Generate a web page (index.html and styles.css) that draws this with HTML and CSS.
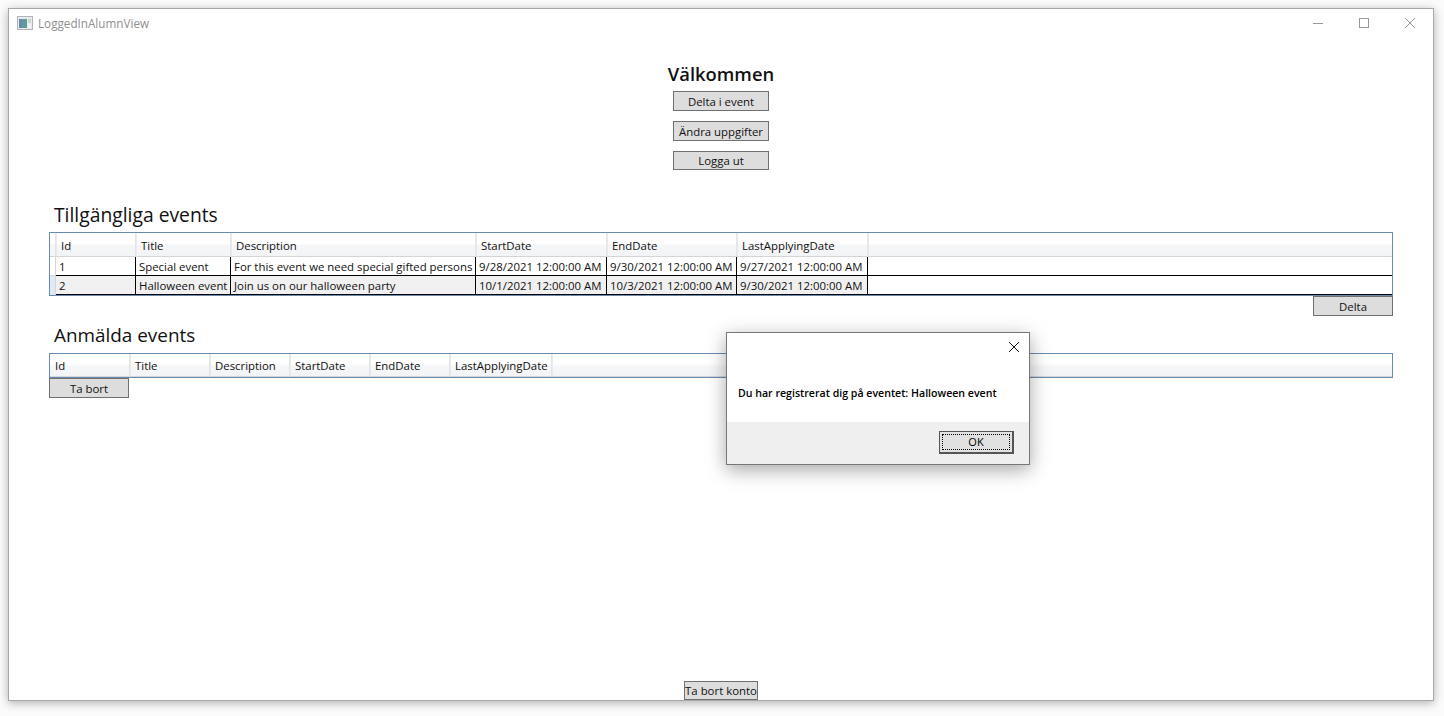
FILE: index.html
```html
<!DOCTYPE html>
<html lang="en">
<head>
    <meta charset="UTF-8">
    <meta name="viewport" content="width=device-width, initial-scale=1.0">
    <title>LoggedInAlumnView</title>
    <link rel="stylesheet" href="styles.css">
</head>
<body>

    <div class="window">

        <header class="titlebar">
            <svg class="app-icon" width="16" height="14" viewBox="0 0 16 14">
                <rect x="0.5" y="0.5" width="15" height="13" fill="#e8eaec" stroke="#b0b4b8"/>
                <rect x="2" y="3" width="8" height="9" fill="#5f9a9c"/>
                <rect x="2" y="3" width="3" height="9" fill="#6a88ab"/>
                <rect x="11" y="3" width="3" height="4" fill="#c6dccb"/>
                <rect x="11" y="8" width="3" height="4" fill="#f4f5f6"/>
            </svg>
            <span class="window-title">LoggedInAlumnView</span>
            <div class="window-controls">
                <svg width="12" height="12" viewBox="0 0 12 12"><path d="M1 6.5H11" stroke="#999" fill="none"/></svg>
                <svg width="12" height="12" viewBox="0 0 12 12"><rect x="1.5" y="1.5" width="9" height="9" stroke="#999" fill="none"/></svg>
                <svg width="12" height="12" viewBox="0 0 12 12"><path d="M1 1L11 11M11 1L1 11" stroke="#999" fill="none"/></svg>
            </div>
        </header>

        <main class="content">
            <div class="welcome">
                <h1>Välkommen</h1>
                <button class="btn btn-menu">Delta i event</button>
                <button class="btn btn-menu">Ändra uppgifter</button>
                <button class="btn btn-menu btn-short">Logga ut</button>
            </div>

            <h2 class="section-title">Tillgängliga events</h2>
            <div class="grid-box">
                <table class="grid">
                    <colgroup>
                        <col class="w-rowhead">
                        <col class="w-80">
                        <col class="w-95">
                        <col class="w-245">
                        <col class="w-131">
                        <col class="w-130">
                        <col class="w-131">
                        <col>
                    </colgroup>
                    <thead>
                        <tr>
                            <th class="corner"></th>
                            <th>Id</th>
                            <th>Title</th>
                            <th>Description</th>
                            <th>StartDate</th>
                            <th>EndDate</th>
                            <th>LastApplyingDate</th>
                            <th class="filler"></th>
                        </tr>
                    </thead>
                    <tbody>
                        <tr>
                            <td class="rowhead"></td>
                            <td>1</td>
                            <td>Special event</td>
                            <td>For this event we need special gifted persons</td>
                            <td>9/28/2021 12:00:00 AM</td>
                            <td>9/30/2021 12:00:00 AM</td>
                            <td>9/27/2021 12:00:00 AM</td>
                            <td class="filler"></td>
                        </tr>
                        <tr class="selected">
                            <td class="rowhead"></td>
                            <td>2</td>
                            <td>Halloween event</td>
                            <td>Join us on our halloween party</td>
                            <td>10/1/2021 12:00:00 AM</td>
                            <td>10/3/2021 12:00:00 AM</td>
                            <td>9/30/2021 12:00:00 AM</td>
                            <td class="filler"></td>
                        </tr>
                    </tbody>
                </table>
            </div>
            <div class="row-end">
                <button class="btn btn-action">Delta</button>
            </div>

            <h2 class="section-title section-second">Anmälda events</h2>
            <div class="grid-box">
                <table class="grid grid-empty">
                    <colgroup>
                        <col class="w-80">
                        <col class="w-80">
                        <col class="w-80">
                        <col class="w-80">
                        <col class="w-80">
                        <col class="w-102">
                        <col>
                    </colgroup>
                    <thead>
                        <tr>
                            <th>Id</th>
                            <th>Title</th>
                            <th>Description</th>
                            <th>StartDate</th>
                            <th>EndDate</th>
                            <th>LastApplyingDate</th>
                            <th class="filler"></th>
                        </tr>
                    </thead>
                </table>
            </div>
            <button class="btn btn-action">Ta bort</button>

            <button class="btn btn-delete">Ta bort konto</button>
        </main>

    </div>

    <div class="dialog">
        <div class="dialog-body">
            <svg class="dialog-close" width="12" height="12" viewBox="0 0 12 12"><path d="M1 1L11 11M11 1L1 11" stroke="#111" fill="none"/></svg>
            <p class="dialog-text">Du har registrerat dig på eventet: Halloween event</p>
        </div>
        <div class="dialog-footer">
            <button class="btn-ok"><span>OK</span></button>
        </div>
    </div>

</body>
</html>
```

FILE: styles.css
```css
html, body {
    height: 100%;
}
body {
    font-family: "Open Sans", "Noto Sans", sans-serif;
    font-size: 11.4px;
    color: #111;
    margin: 0;
    padding: 8px 10px 15px 8px;
    box-sizing: border-box;
    background-color: #fbfbfb;
    overflow: hidden;
}
.window {
    height: 693px;
    box-sizing: border-box;
    border: 1px solid #a8a8a8;
    background-color: #fff;
    box-shadow: 0 2px 9px rgba(0, 0, 0, 0.3);
    display: flex;
    flex-direction: column;
}
.titlebar {
    height: 30px;
    flex: none;
    box-sizing: border-box;
    display: flex;
    align-items: center;
    padding: 0 0 2px 8px;
    color: #8f8f8f;
    font-size: 11.7px;
}
.app-icon {
    margin-right: 5px;
}
.window-controls {
    margin-left: auto;
    display: flex;
    gap: 34px;
    padding-right: 17px;
}
.content {
    flex: 1;
    display: flex;
    flex-direction: column;
    padding: 0 40px 0 40px;
    min-height: 0;
}
.welcome {
    display: flex;
    flex-direction: column;
    align-items: center;
}
h1 {
    font-size: 18.4px;
    font-weight: 600;
    line-height: 26px;
    margin: 22px 0 4px 0;
}
.btn {
    font-family: inherit;
    font-size: 11.4px;
    color: #111;
    background-color: #ddd;
    border: 1px solid #707070;
    padding: 0;
    box-sizing: border-box;
    display: block;
}
.btn-menu {
    width: 96px;
    height: 20px;
    margin-bottom: 10px;
    margin-top: 0;
}
.btn-short {
    height: 19px;
    margin-bottom: 0;
}
.section-title {
    font-size: 19.3px;
    font-weight: 400;
    line-height: 27px;
    margin: 31px 0 4px 5px;
}
.section-second {
    font-size: 18.9px;
    margin-top: 6px;
    margin-bottom: 4px;
}
.grid-box {
    border: 1px solid #688caf;
    margin-right: 0;
}
.grid {
    width: 100%;
    table-layout: fixed;
    border-collapse: separate;
    border-spacing: 0;
}
.w-rowhead { width: 6px; }
.w-80 { width: 80px; }
.w-95 { width: 95px; }
.w-102 { width: 102px; }
.w-245 { width: 245px; }
.w-130 { width: 130px; }
.w-131 { width: 131px; }
th {
    height: 24px;
    box-sizing: border-box;
    padding: 2px 0 0 4px;
    font-weight: 400;
    text-align: left;
    background: linear-gradient(#fff 0, #fff 45%, #f5f6f8 55%, #f3f4f6 100%);
    border-left: 1px solid #e9eaec;
    border-right: 1px solid #e4e5e7;
    border-bottom: 1px solid #d5d5d5;
}
.grid-empty th {
    height: 23px;
    padding-top: 0;
}
th:first-child {
    border-left: 0;
    padding-left: 5px;
}
th.corner {
    padding: 0;
}
th.filler {
    border-right: 0;
}
td {
    height: 19px;
    box-sizing: border-box;
    padding: 0 0 0 3px;
    border-right: 1px solid #000;
    border-bottom: 1px solid #000;
    white-space: nowrap;
    overflow: hidden;
}
td.rowhead {
    padding: 0;
    border-right: 1px solid #d5d5d5;
    border-bottom: 1px solid #d5d5d5;
}
td.filler {
    border-right: 0;
    background-color: #fff;
}
.selected td {
    background-color: #f0f0f0;
}
.selected td.rowhead {
    background-color: #dcebf7;
    border-bottom: 0;
}
.selected td.filler {
    background-color: #fff;
}
.row-end {
    display: flex;
    justify-content: flex-end;
}
.btn-action {
    width: 80px;
    height: 20px;
}
.btn-delete {
    margin: auto auto 0 auto;
    width: 74px;
    height: 19px;
    white-space: nowrap;
}
.dialog {
    position: absolute;
    left: 726px;
    top: 332px;
    width: 304px;
    height: 133px;
    box-sizing: border-box;
    border: 1px solid #777;
    background-color: #fff;
    box-shadow: 0 5px 18px rgba(0, 0, 0, 0.35);
    display: flex;
    flex-direction: column;
}
.dialog-body {
    height: 89px;
    flex: none;
    position: relative;
}
.dialog-close {
    position: absolute;
    right: 9px;
    top: 8px;
}
.dialog-text {
    margin: 0;
    padding: 53px 0 0 11px;
    font-size: 10.6px;
    font-weight: 600;
    color: #000;
    white-space: nowrap;
}
.dialog-footer {
    flex: 1;
    background-color: #efefef;
    display: flex;
    justify-content: flex-end;
    align-items: flex-start;
    padding: 9px 15px 0 0;
}
.btn-ok {
    width: 75px;
    height: 23px;
    padding: 0;
    font-family: inherit;
    font-size: 11px;
    color: #000;
    background-color: #e1e1e1;
    border: 1px solid #555;
    border-right-width: 2px;
    border-bottom-width: 2px;
    display: flex;
}
.btn-ok span {
    flex: 1;
    margin: 2px;
    border: 1px dotted #000;
    line-height: 14px;
}
```
